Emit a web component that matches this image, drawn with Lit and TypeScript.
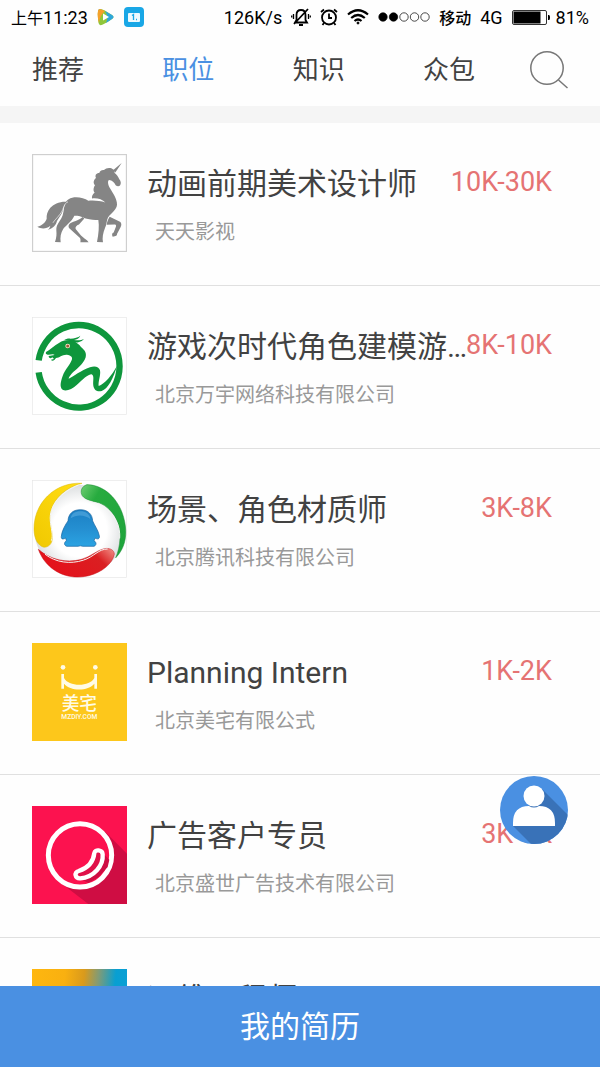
import { LitElement, html, svg, css } from "lit";
import { customElement, property, state } from "lit/decorators.js";

interface Job {
  title: string;
  company?: string;
  salary?: string;
  logo: string;
}

const JOBS: Job[] = [
  { title: "动画前期美术设计师", company: "天天影视", salary: "10K-30K", logo: "unicorn" },
  { title: "游戏次时代角色建模游…", company: "北京万宇网络科技有限公司", salary: "8K-10K", logo: "dragon" },
  { title: "场景、角色材质师", company: "北京腾讯科技有限公司", salary: "3K-8K", logo: "penguin" },
  { title: "Planning Intern", company: "北京美宅有限公式", salary: "1K-2K", logo: "house" },
  { title: "广告客户专员", company: "北京盛世广告技术有限公司", salary: "3K-5K", logo: "bean" },
  { title: "运维工程师", logo: "gradient" },
];

const TABS = ["推荐", "职位", "知识", "众包"];

const LOGOS: Record<string, { box: string; art: unknown }> = {
  unicorn: {
    box: "36 27 285 295",
    art: svg`
      <rect x="37.5" y="28.500" width="282" height="292" fill="#fff" stroke="#cfcfcf" stroke-width="4"/>
      <g fill="#858585">
        <path d="M305 54L279 76L286 83Z"/>
        <path d="M274 70C266 67 257 70 252 75C244 74 238 80 238 84C228 84 224 92 228 99C220 105 219 115 225 121C219 130 220 139 224 143C217 149 215 156 216 161C232 159 247 164 256 173C240 168 220 166 205 168C190 158 163 153 146 163C136 169 134 180 132 190C130 205 128 217 118 230C112 239 108 246 109 257C110 268 110 277 105 292L122 293C120 279 122 264 130 252C140 240 154 232 163 213C180 212 185 217 197 221C212 225 224 225 235 226C238 244 236 268 231 292L249 293C246 280 249 265 255 250C261 237 259 229 264 218C276 203 290 195 291 180C292 162 278 144 270 130C264 119 262 109 267 105C277 106 283 112 287 121C291 125 297 125 300 122C304 116 303 109 298 103C295 95 290 89 284 84L282 75Z"/>
        <path d="M145 171C122 168 101 177 91 189C82 200 79 211 80 222C77 233 67 242 52 246C63 253 80 253 91 243C90 249 87 253 83 256C99 252 108 241 111 229C117 216 128 207 130 190C132 181 137 175 145 171Z"/>
        <path d="M187 217C181 225 165 229 152 235C146 239 144 245 147 250L180 280C182 284 182 289 181 293H206C203 286 192 281 183 272L167 253C165 247 169 242 177 239L193 221Z"/>
        <path d="M269 216L300 231C305 235 305 241 302 247L291 268C292 272 288 275 278 276C275 270 276 264 281 263L288 245C289 241 287 239 283 239L260 240C261 233 264 224 269 216Z"/>
      </g>
      <path d="M144 171C131 176 132 191 123 204C111 221 105 224 99 234" fill="none" stroke="#fff" stroke-width="2"/>`,
  },
  dragon: {
    box: "36 37 285 294",
    art: svg`
      <rect x="37.500" y="38.500" width="282" height="291" fill="#fff" stroke="#e6e6e6" stroke-width="2"/>
      <path d="M56 167A122 124 0 1 1 56 203" fill="none" stroke="#0e963c" stroke-width="19"/>
      <g fill="#0e963c">
        <path d="M78 142C91 136 103 121 118 114C130 107 145 105 158 109C169 113 177 119 183 127C195 137 200 145 197 158C192 174 178 187 166 197C153 208 147 217 146 222C160 216 183 197 210 188C224 183 237 186 240 197C243 212 234 231 236 244C254 237 276 212 291 183C281 220 264 252 245 259C232 263 222 256 220 243C218 229 224 213 215 209C203 209 188 225 170 241C156 254 138 261 128 255C118 248 122 231 128 214C135 195 152 178 156 164C158 156 150 151 141 150C126 149 119 159 108 160C104 167 96 171 93 165L102 163L97 158C91 163 86 160 86 154L104 151C98 145 91 152 83 150C78 149 76 146 78 142Z"/>
        <path d="M132 107C137 103 145 101 151 102C163 101 175 98 181 93C178 101 170 104 162 106C174 108 184 107 192 103C184 113 171 114 160 114L145 108Z"/>
      </g>
      <circle cx="143" cy="124" r="7" fill="#fbe9ce"/>
      <circle cx="143" cy="124" r="4.500" fill="#9c5a33"/>`,
  },
  penguin: {
    box: "36 27 285 297",
    art: svg`
      <defs>
        <linearGradient id="sea" x1="0" y1="0" x2="0" y2="1">
          <stop offset="0" stop-color="#1c80c4"/><stop offset=".55" stop-color="#2590d2"/><stop offset="1" stop-color="#2ba3e2"/>
        </linearGradient>
        <linearGradient id="sun" x1="0" y1="1" x2=".8" y2="0">
          <stop offset="0" stop-color="#f0c800"/><stop offset="1" stop-color="#ffdc12"/>
        </linearGradient>
        <linearGradient id="leaf" x1="0" y1="0" x2="1" y2="1">
          <stop offset="0" stop-color="#6fce72"/><stop offset=".25" stop-color="#27ab3f"/><stop offset="1" stop-color="#1da33a"/>
        </linearGradient>
        <linearGradient id="fire" x1="1" y1="0" x2="0" y2=".4">
          <stop offset="0" stop-color="#f2938a"/><stop offset=".3" stop-color="#da1f22"/><stop offset="1" stop-color="#e5101a"/>
        </linearGradient>
        <radialGradient id="disc"><stop offset=".6" stop-color="#fff"/><stop offset="1" stop-color="#dcdfe0"/></radialGradient>
      </defs>
      <rect x="37.500" y="28.500" width="282" height="294" fill="#fff" stroke="#e6e6e6" stroke-width="2"/>
      <circle cx="179" cy="178" r="136" fill="url(#disc)"/>
      <path d="M186 37C104 32 40 98 42 178C43 205 53 226 72 231C92 230 99 213 97 194C94 170 88 155 91 130C97 87 136 49 186 37Z" fill="url(#sun)" stroke="#dbb80a" stroke-width="1.500"/>
      <path d="M201 41C185 46 179 62 187 75C196 88 218 91 239 97C277 112 303 158 300 204C299 227 294 246 287 263C312 237 321 203 316 166C307 94 258 42 201 41Z" fill="url(#leaf)" stroke="#168a30" stroke-width="1.500"/>
      <path d="M55 237C78 302 143 333 206 317C246 307 277 281 283 252C283 239 269 232 253 235C230 240 212 260 183 268C138 279 91 269 55 237Z" fill="url(#fire)" stroke="#c40d14" stroke-width="1.500"/>
      <path d="M94 211C101 195 92 170 91 151C86 104 124 62 176 42M188 80C202 96 227 92 249 106C285 128 302 168 299 204M75 252C107 277 151 283 190 270C222 260 235 236 263 236" fill="none" stroke="#f5f6f4" stroke-width="3"/>
      <path d="M181 117C157 117 145 131 144 151C137 161 125 181 124 198C123 206 128 208 137 203L139 211C132 216 131 224 140 228H174Q181 225 188 228H222C231 224 229 215 222 211L225 203C234 208 240 205 238 196C235 179 223 164 218 151C217 131 204 117 181 117Z" fill="url(#sea)" stroke="#125f9e" stroke-width="2"/>
      <path d="M152 143C155 128 166 122 181 122C197 122 209 130 211 145C194 131 168 131 152 143Z" fill="#64b4e5" opacity=".5"/>`,
  },
  house: {
    box: "36 32 285 294",
    art: svg`
      <rect x="36" y="32" width="285" height="294" fill="#fdc71b"/>
      <circle cx="129" cy="105" r="7" fill="#fffbe6"/>
      <circle cx="226" cy="105" r="7" fill="#fffbe6"/>
      <path d="M124 125H132V137C145 164 210 164 223 137V125H231V169H223V154C205 177 150 177 132 154V169H124Z" fill="#fffbe6"/>
      <text class="mark" x="178" y="234" font-size="53">美宅</text>
      <text class="mark latin" x="178" y="261" font-size="20">MZDIY.COM</text>`,
  },
  bean: {
    box: "36 32 285 294",
    art: svg`
      <rect x="36" y="32" width="285" height="294" fill="#fc124f"/>
      <path d="M254 108L321 175V326H205L119 260Z" fill="#cf0d43"/>
      <circle cx="180" cy="180" r="95" fill="#fc124f" stroke="#fff" stroke-width="15"/>
      <path d="M251 176L268 193L263 215L235 246L205 263L184 252Z" fill="#cf0d43"/>
      <path d="M223 173C225 161 247 163 248 177C251 211 221 246 181 249C165 250 161 231 176 227C204 218 220 202 223 173Z" fill="#e01049" stroke="#fff" stroke-width="13" stroke-linejoin="round"/>`,
  },
  gradient: {
    box: "0 0 95 98",
    art: svg`
      <defs>
        <linearGradient id="dawn" x1="0" y1="0" x2="1" y2="0.1">
          <stop offset="0" stop-color="#ffb70f"/><stop offset=".35" stop-color="#f9b010"/><stop offset=".55" stop-color="#d99a1c"/>
          <stop offset=".7" stop-color="#829b75"/><stop offset=".88" stop-color="#089fd2"/><stop offset="1" stop-color="#0a9fd4"/>
        </linearGradient>
      </defs>
      <rect width="95" height="98" fill="url(#dawn)"/>`,
  },
};

@customElement("job-row")
export class JobRow extends LitElement {
  static styles = css`
    :host {
      display: flex;
      flex: none;
      box-sizing: border-box;
      height: 163px;
      padding: 31px 48px 0 32px;
      border-bottom: 1px solid #e0e0e0;
    }
    .logo { flex: none; width: 95px; height: 98px; margin-right: 20px; }
    .mark {
      fill: #fffbe6;
      font-family: "Noto Sans CJK SC", sans-serif;
      font-weight: 500;
      text-anchor: middle;
    }
    .latin { font-family: Roboto, sans-serif; }
    .info { flex: 1; min-width: 0; padding-top: 10px; }
    .title {
      margin: 0;
      font-size: 30px;
      line-height: 40px;
      font-weight: inherit;
      color: #424242;
      white-space: nowrap;
    }
    .company {
      margin: 14px 0 0 8px;
      font-size: 20px;
      line-height: 28px;
      color: #999;
      white-space: nowrap;
    }
    .salary {
      flex: none;
      padding-top: 8px;
      font-size: 27px;
      line-height: 40px;
      color: #e57373;
    }
  `;

  @property({ attribute: false }) job!: Job;

  render() {
    const { title, company, salary, logo } = this.job;
    return html`
      <svg class="logo" viewBox=${LOGOS[logo].box} preserveAspectRatio="none" aria-hidden="true">${LOGOS[logo].art}</svg>
      <div class="info">
        <h2 class="title">${title}</h2>
        ${company ? html`<p class="company">${company}</p>` : null}
      </div>
      ${salary ? html`<span class="salary">${salary}</span>` : null}
    `;
  }
}

@customElement("status-bar")
export class StatusBar extends LitElement {
  static styles = css`
    :host {
      display: flex;
      flex: none;
      align-items: center;
      justify-content: space-between;
      height: 34px;
      padding: 0 11px;
      font-size: 18px;
      color: #000;
      white-space: nowrap;
    }
    .side, .clock { display: flex; align-items: center; }
    .side { gap: 9px; }
    .han { font-size: 16px; }
    .carrier { font-weight: 500; }
    .charge { display: flex; align-items: center; gap: 6px; }
    svg { display: block; flex: none; }
  `;

  render() {
    return html`
      <div class="side">
        <span class="clock"><span class="han">上午</span>11:23</span>
        <svg width="18" height="18" viewBox="0 0 18 18">
          <path d="M3 1Q1 1 1 4V9L10 5Z" fill="#35b4e8"/>
          <path d="M3 1Q5 0 15 7Q18 9 15 11Q5 18 3 17Q1 16 1 9Q0 2 3 1Z" fill="#8fc63b"/>
          <path d="M1 3Q1 1 3 1L8 3Q3 7 2 15Q0 8 1 3Z" fill="#f5a12a"/>
          <path d="M8 3L15 7Q18 9 15 11L9 15Q12 9 8 3Z" fill="#2ea7dc"/>
          <path d="M6 5.500L12 9L6 12.500Z" fill="#fff"/>
        </svg>
        <svg width="20" height="20" viewBox="0 0 20 20">
          <rect width="20" height="20" rx="4" fill="#19a7e6"/>
          <rect x="4" y="6" width="12" height="9" rx="1" fill="#eefaff"/>
          <path d="M8 8.500L9.500 7.500V13M12 12.500H13" stroke="#19a7e6" stroke-width="1.300" fill="none"/>
        </svg>
      </div>
      <div class="side">
        <span>126K/s</span>
        <svg width="20" height="20" viewBox="0 0 20 20" fill="none" stroke="#000" stroke-width="1.800">
          <path d="M5.500 13V8Q5.500 3 10 3Q14.500 3 14.500 8V13L16 15.500H4L5.500 13ZM8 18H12M17 2L3 17"/>
          <path d="M2.500 7V12M17.500 7V12M0.700 8.500V10.500M19.300 8.500V10.500" stroke-width="1.300"/>
        </svg>
        <svg width="18" height="18" viewBox="0 0 18 18" fill="none" stroke="#000" stroke-width="1.800">
          <circle cx="9" cy="9.500" r="7"/><path d="M9 5.500V10H12M1 4L4 1.500M17 4L14 1.500M4 15L2.500 17M14 15L15.500 17"/>
        </svg>
        <svg width="22" height="16" viewBox="0 0 22 16" fill="none" stroke="#000" stroke-width="2.200">
          <path d="M1 5.500Q11 -3 21 5.500M4.200 9Q11 3 17.800 9M7.500 12Q11 9 14.500 12"/><circle cx="11" cy="14" r="1" fill="#000" stroke-width="1"/>
        </svg>
        <svg width="52" height="10" viewBox="0 0 52 10" fill="none" stroke="#000" stroke-width="0.700">
          <circle cx="5" cy="5" r="4.200" fill="#000"/><circle cx="15.500" cy="5" r="4.200" fill="#000"/>
          <circle cx="26" cy="5" r="4.200"/><circle cx="36.500" cy="5" r="4.200"/><circle cx="47" cy="5" r="4.200"/>
        </svg>
        <span class="han carrier">移动</span>
        <span>4G</span>
        <span class="charge">
          <svg width="38" height="15" viewBox="0 0 38 15">
            <rect x="0.500" y="0.500" width="34" height="14" rx="1.500" fill="#fff" stroke="#333"/>
            <rect x="1.500" y="1.500" width="27" height="12" fill="#000"/>
            <path d="M36 5H37Q38 5 38 7.500Q38 10 37 10H36Z" fill="#000"/>
          </svg>
          81%
        </span>
      </div>
    `;
  }
}

@customElement("app-root")
export class AppRoot extends LitElement {
  static styles = css`
    :host {
      position: relative;
      display: flex;
      flex-direction: column;
      height: 100vh;
      background: #fefefe;
      font-family: Roboto, "Noto Sans CJK SC", sans-serif;
    }
    .nav {
      display: flex;
      flex: none;
      align-items: center;
      justify-content: space-between;
      height: 72px;
      padding: 0 32px;
      border-bottom: 17px solid #f5f5f5;
    }
    button {
      padding: 0;
      border: 0;
      background: none;
      font: inherit;
      cursor: pointer;
    }
    .tab { font-size: 26px; line-height: 36px; color: #424242; }
    .tab[aria-selected="true"] { color: #4a90e2; }
    .tabs {
      display: flex;
      flex: 1;
      justify-content: space-between;
      margin-right: 55px;
    }
    .search svg, .me svg { display: block; }
    .list {
      display: flex;
      flex: 1;
      flex-direction: column;
      min-height: 0;
      overflow-y: auto;
      scrollbar-width: none;
    }
    .resume {
      flex: none;
      height: 81px;
      padding-bottom: 5px;
      background: #4a90e2;
      color: #fff;
      font-size: 30px;
    }
    .me {
      position: absolute;
      right: 32px;
      bottom: 223px;
      border-radius: 50%;
    }
  `;

  @state() private active = "职位";

  render() {
    return html`
      <status-bar></status-bar>
      <nav class="nav">
        <div class="tabs" role="tablist">
          ${TABS.map(
            (tab) => html`<button
              class="tab"
              role="tab"
              aria-selected=${tab === this.active ? "true" : "false"}
              @click=${() => (this.active = tab)}
            >${tab}</button>`
          )}
        </div>
        <button class="search" aria-label="搜索">
          <svg width="38" height="38" viewBox="0 0 38 38" fill="none" stroke="#777" stroke-width="1.500">
            <circle cx="17" cy="17" r="16.200"/><path d="M28.500 29L37.500 37"/>
          </svg>
        </button>
      </nav>
      <main class="list">
        ${JOBS.map((job) => html`<job-row .job=${job}></job-row>`)}
      </main>
      <button class="me" aria-label="个人中心">
        <svg width="68" height="68" viewBox="0 0 68 68">
          <defs><clipPath id="round"><circle cx="34" cy="34" r="34"/></clipPath></defs>
          <g clip-path="url(#round)">
            <rect width="68" height="68" fill="#4a90e2"/>
            <path d="M42 13L68 39V68H31L13 50Z" fill="#3972b8"/>
          </g>
          <circle cx="34" cy="20" r="10.500" fill="#fff"/>
          <path d="M13 50V47Q13 30 29 30Q34 33 39 30Q55 30 55 47V50Z" fill="#fff"/>
        </svg>
      </button>
      <button class="resume">我的简历</button>
    `;
  }
}
